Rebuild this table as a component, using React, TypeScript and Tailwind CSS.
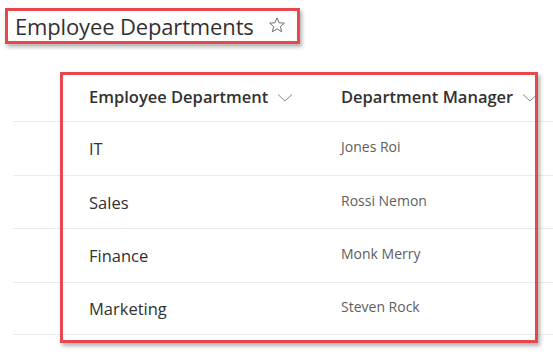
import React from "react";

const rows = [
  { dept: "IT", manager: "Jones Roi" },
  { dept: "Sales", manager: "Rossi Nemon" },
  { dept: "Finance", manager: "Monk Merry" },
  { dept: "Marketing", manager: "Steven Rock" },
];

function Chevron() {
  return (
    <svg width="16" height="10" viewBox="0 0 16 10" className="ml-[9px] mt-[1px]">
      <path d="M1 1.5 L8 8 L15 1.5" fill="none" stroke="#8a8886" strokeWidth="1" />
    </svg>
  );
}

export default function App() {
  return (
    <div
      className="relative w-[553px] h-[354px] bg-white overflow-hidden text-[#323130]"
      style={{ fontFamily: '"Open Sans", "Noto Sans", sans-serif' }}
    >
      {/* Title */}
      <div className="ml-[5px] mt-[8px] w-[295px] h-[36px] border-[3px] border-[#e5484d] shadow-[2px_3px_4px_rgba(0,0,0,0.3)] flex items-center pl-[7px]">
        <span className="text-[22px] tracking-[-0.15px] text-[#323130] leading-none">Employee Departments</span>
        <svg width="18" height="18" viewBox="0 0 24 24" className="ml-[14px] -mt-[2px]">
          <path
            d="M12 2.5 L14.8 9 L21.8 9.5 L16.5 14 L18.2 21 L12 17.2 L5.8 21 L7.5 14 L2.2 9.5 L9.2 9 Z"
            fill="none"
            stroke="#605e5c"
            strokeWidth="1.2"
            strokeLinejoin="round"
          />
        </svg>
      </div>

      {/* List */}
      <div className="mt-[31px] ml-[13px]">
        <div className="h-[47px] flex items-center text-[16.5px] font-semibold text-[#323130] -mt-[1px]">
          <div className="w-[328px] pl-[76px] flex items-center">
            Employee Department
            <Chevron />
          </div>
          <div className="flex items-center">
            Department Manager
            <Chevron />
          </div>
        </div>
        {rows.map((r, i) => (
          <div
            key={r.dept}
            className={`h-[53.5px] flex items-center border-t border-[#edebe9] ${i === rows.length - 1 ? "border-b" : ""}`}
          >
            <div className="w-[328px] pl-[76px] text-[16.5px] text-[#323130] mt-[3px]">{r.dept}</div>
            <div className="text-[14px] text-[#605e5c] -mt-[3px]">{r.manager}</div>
          </div>
        ))}
      </div>

      {/* Highlight box over the list */}
      <div className="absolute left-[60px] top-[72px] w-[478px] h-[271px] border-[3px] border-[#e5484d] shadow-[2px_3px_4px_rgba(0,0,0,0.3)] pointer-events-none" />
    </div>
  );
}
